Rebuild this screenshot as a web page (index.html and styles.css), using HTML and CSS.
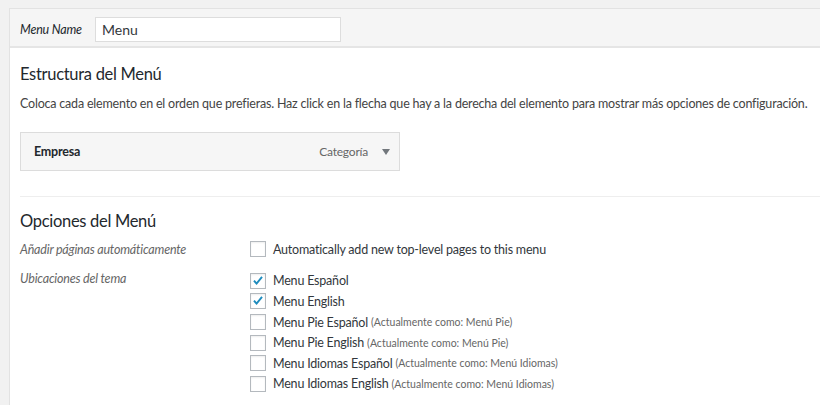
FILE: index.html
```html
<!DOCTYPE html>
<html lang="es">
<head>
    <meta charset="UTF-8">
    <title>Menús</title>
    <link rel="stylesheet" href="styles.css">
</head>
<body>
    <div class="menu-edit">
        <div class="menu-header">
            <label class="menu-name-label">Menu Name</label>
            <input class="menu-name" type="text" value="Menu">
        </div>
        <div class="menu-body">
            <h3>Estructura del Menú</h3>
            <p class="desc">Coloca cada elemento en el orden que prefieras. Haz click en la flecha que hay a la derecha del elemento para mostrar más opciones de configuración.</p>
            <div class="menu-item">
                <span class="item-title">Empresa</span>
                <span class="item-type">Categoría</span>
                <svg class="item-arrow" viewBox="0 0 8 6"><path d="M0 0h8L4 6z" /></svg>
            </div>
            <div class="separator"></div>
            <h3>Opciones del Menú</h3>
            <div class="option-row auto-add">
                <div class="option-label">Añadir páginas automáticamente</div>
                <div class="option-input">
                    <label class="check"><span class="box"></span>Automatically add new top-level pages to this menu</label>
                </div>
            </div>
            <div class="option-row locations">
                <div class="option-label">Ubicaciones del tema</div>
                <div class="option-input">
                    <label class="check"><span class="box"><svg viewBox="0 0 16 16"><path d="M3.4 7.6l3 3.4 6.2-7.6" /></svg></span>Menu Español</label>
                    <label class="check"><span class="box"><svg viewBox="0 0 16 16"><path d="M3.4 7.6l3 3.4 6.2-7.6" /></svg></span>Menu English</label>
                    <label class="check"><span class="box"></span>Menu Pie Español <small>(Actualmente como: Menú Pie)</small></label>
                    <label class="check"><span class="box"></span>Menu Pie English <small>(Actualmente como: Menú Pie)</small></label>
                    <label class="check"><span class="box"></span>Menu Idiomas Español <small>(Actualmente como: Menú Idiomas)</small></label>
                    <label class="check"><span class="box"></span>Menu Idiomas English <small>(Actualmente como: Menú Idiomas)</small></label>
                </div>
            </div>
        </div>
    </div>
</body>
</html>
```

FILE: styles.css
```css
body {
    margin: 8px 0 0 9px;
    background-color: #f1f1f1;
    font-family: Lato, "Open Sans", sans-serif;
    font-size: 12.5px;
    letter-spacing: -0.2px;
    color: #444;
    overflow: hidden;
}
.menu-edit {
    background-color: #fff;
    border: 1px solid #e2e2e2;
    border-right: none;
    min-height: 420px;
}
.menu-header {
    display: flex;
    align-items: center;
    height: 37px;
    padding: 0 10px;
    background-color: #f5f5f5;
    border-bottom: 2px solid #e5e5e5;
}
.menu-name-label {
    font-style: italic;
    color: #23282d;
    width: 75px;
    margin-top: 3px;
}
.menu-name {
    width: 246px;
    height: 25px;
    box-sizing: border-box;
    border: 1px solid #ddd;
    padding: 0 6px;
    font-family: inherit;
    font-size: 14px;
    color: #32373c;
    margin-top: 3px;
}
.menu-body {
    padding: 0 0 0 10px;
}
h3 {
    margin: 0;
    font-size: 16.5px;
    letter-spacing: -0.3px;
    font-weight: 400;
    color: #23282d;
}
.menu-body > h3:first-child {
    margin-top: 16px;
}
.desc {
    margin: 12px 0 0;
    color: #444;
    white-space: nowrap;
}
.menu-item {
    display: flex;
    align-items: center;
    margin-top: 21px;
    padding: 0 9px 0 13px;
    box-sizing: border-box;
    width: 380px;
    height: 39px;
    background-color: #f6f6f6;
    border: 1px solid #dcdcdc;
}
.item-title {
    flex: 1;
    font-weight: 700;
    color: #23282d;
}
.item-type {
    color: #666;
    font-size: 12px;
    margin-right: 14px;
}
.item-arrow {
    width: 8px;
    height: 6px;
    fill: #72777c;
}
.separator {
    border-top: 1px solid #eee;
    margin: 25px 0 14px;
}
.option-row {
    display: flex;
}
.option-label {
    width: 230px;
    font-style: italic;
    color: #666;
}
.auto-add {
    margin-top: 8px;
}
.auto-add .option-label {
    padding-top: 3px;
}
.locations {
    margin-top: 11px;
}
.option-input {
    display: flex;
    flex-direction: column;
}
.check {
    display: flex;
    align-items: center;
    height: 20.6px;
    color: #32373c;
}
.box {
    width: 16px;
    height: 16px;
    box-sizing: border-box;
    border: 1px solid #b4b9be;
    background-color: #fff;
    box-shadow: inset 0 1px 2px rgba(0, 0, 0, 0.07);
    margin-right: 7px;
    display: flex;
}
.box svg {
    width: 14px;
    height: 14px;
    fill: none;
    stroke: #1e8cbe;
    stroke-width: 2.2;
}
small {
    font-size: 10.5px;
    letter-spacing: 0;
    color: #666;
    margin-left: 3px;
}
```
